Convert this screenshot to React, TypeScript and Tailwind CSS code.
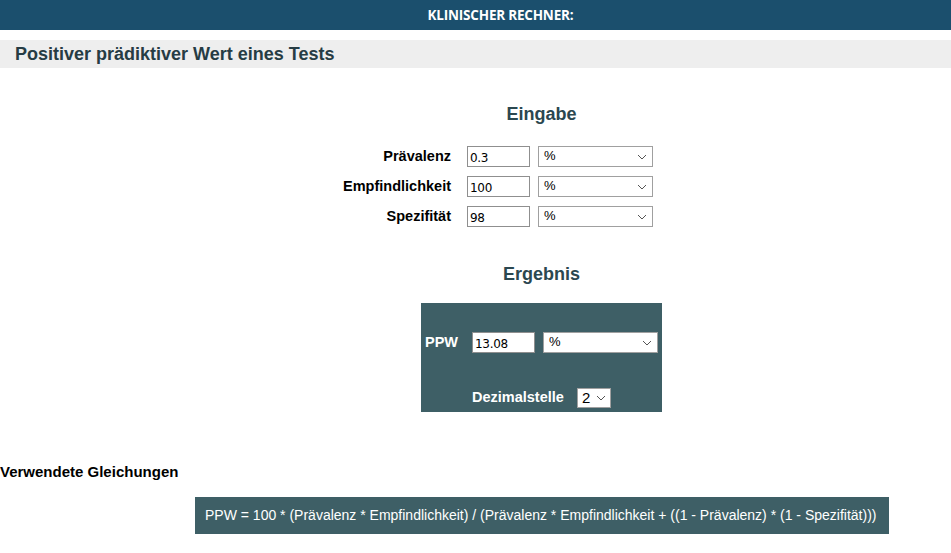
const Chevron = () => (
  <svg width="10" height="6" viewBox="0 0 10 6" fill="none" className="shrink-0">
    <path d="M1 1l4 4 4-4" stroke="#555" strokeWidth="1" />
  </svg>
);

const Select = ({ value, width }: { value: string; width: string }) => (
  <div
    className={`${width} h-[21px] border border-[#a0a0a0] bg-white flex items-center justify-between pl-[5px] pr-[5px] text-[13px] text-black`}
  >
    <span className="leading-none -mt-[3px]">{value}</span>
    <Chevron />
  </div>
);

const Field = ({ value }: { value: string }) => (
  <div className="w-[63px] h-[21px] border border-[#8f8f8f] bg-white flex items-center pl-[2px] text-[12px] text-black font-['DejaVu_Sans',sans-serif] tracking-[-0.3px]">
    <span className="mt-[2px]">{value}</span>
  </div>
);

const inputs = [
  { label: "Prävalenz", value: "0.3" },
  { label: "Empfindlichkeit", value: "100" },
  { label: "Spezifität", value: "98" },
];

export default function App() {
  return (
    <div className="w-[951px] min-h-[553px] bg-white font-['Liberation_Sans',Arial,sans-serif]">
      <div className="h-[30px] bg-[#1b4f6d] flex items-center justify-center pl-[50px]">
        <span className="text-white text-[13.5px] font-bold font-['Open_Sans',sans-serif] tracking-[-0.2px]">
          KLINISCHER RECHNER:
        </span>
      </div>

      <div className="mt-[10px] h-[28px] bg-[#eeeeee] flex items-center px-[15px]">
        <h1 className="text-[18px] font-bold text-[#263c44]">
          Positiver prädiktiver Wert eines Tests
        </h1>
      </div>

      <div className="ml-[421px] w-[241px] text-center mt-[33px] text-[18px] font-bold text-[#2b4750]">
        Eingabe
      </div>

      <div className="mt-[18px] flex flex-col gap-[9px]">
        {inputs.map((row) => (
          <div key={row.label} className="flex items-center ml-[300px]">
            <div className="w-[151px] text-right text-[14.5px] leading-[21px] font-bold text-black">{row.label}</div>
            <div className="ml-[16px]">
              <Field value={row.value} />
            </div>
            <div className="ml-[8px]">
              <Select value="%" width="w-[115px]" />
            </div>
          </div>
        ))}
      </div>

      <div className="ml-[421px] w-[241px] text-center mt-[34px] text-[18px] font-bold text-[#2b4750]">
        Ergebnis
      </div>

      <div className="ml-[421px] mt-[15px] w-[241px] h-[109px] bg-[#3e5f66] pl-[4px] pt-[29px]">
        <div className="flex items-center">
          <div className="w-[47px] text-[14.5px] font-bold text-white">PPW</div>
          <Field value="13.08" />
          <div className="ml-[8px]">
            <Select value="%" width="w-[115px]" />
          </div>
        </div>
        <div className="flex items-center mt-[33px] ml-[47px]">
          <span className="text-[14.5px] font-bold text-white">Dezimalstelle</span>
          <div className="ml-[13px] w-[34px] h-[20px] bg-white border border-[#a0a0a0] flex items-center justify-between px-[4px] text-[15px] text-black">
            <span className="leading-none">2</span>
            <Chevron />
          </div>
        </div>
      </div>

      <div className="mt-[49px] text-[15px] font-bold text-black">Verwendete Gleichungen</div>

      <div className="ml-[195px] mt-[13px] w-[694px] h-[37px] bg-[#3e5f66] flex items-center pl-[10px] text-[14px] text-white">
        PPW = 100 * (Prävalenz * Empfindlichkeit) / (Prävalenz * Empfindlichkeit + ((1 - Prävalenz) * (1 - Spezifität)))
      </div>
    </div>
  );
}
